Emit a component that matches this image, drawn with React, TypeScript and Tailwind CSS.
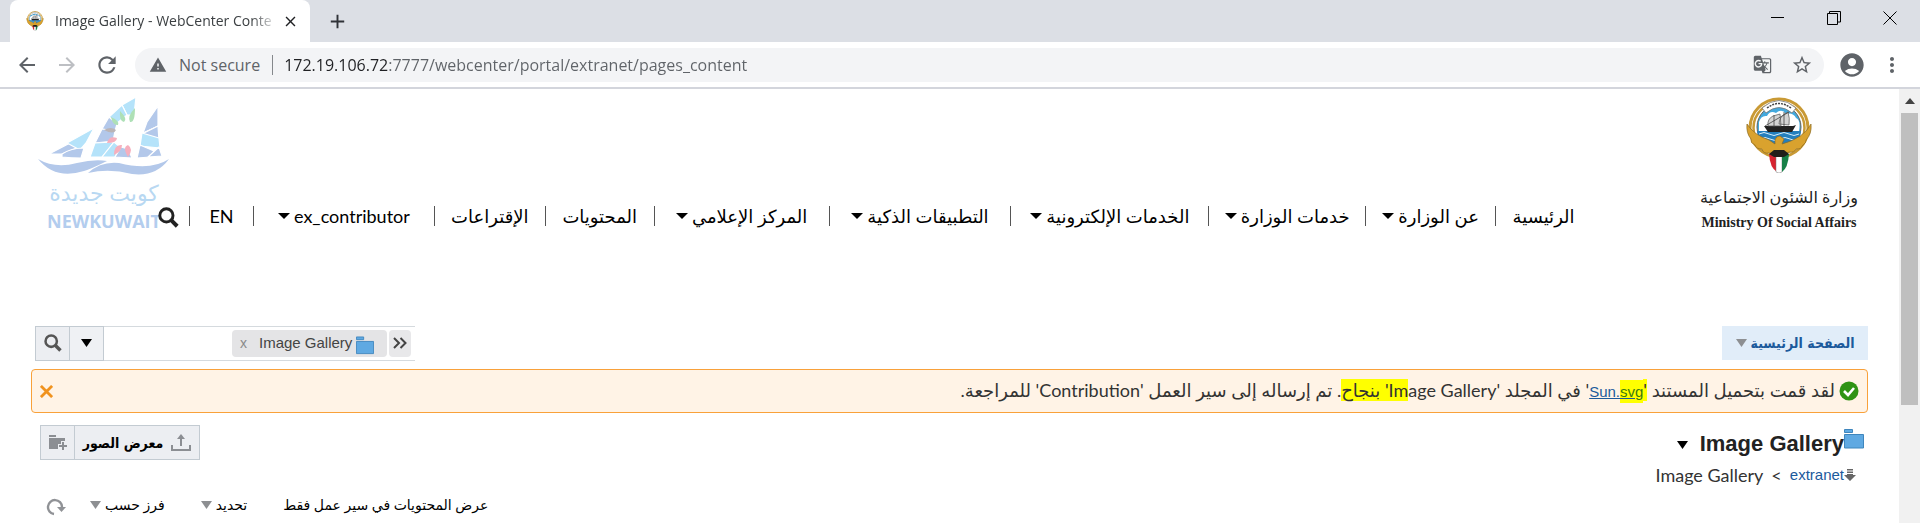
import type { ReactNode } from 'react'
import { MdArrowBack, MdArrowForward, MdRefresh, MdWarning, MdGTranslate, MdStarBorder, MdAccountCircle, MdMoreVert, MdClose, MdAdd } from 'react-icons/md'

interface NavEntry {
  label: string
  menu?: boolean
}

const NAV: NavEntry[] = [
  { label: 'الرئيسية' },
  { label: 'عن الوزارة', menu: true },
  { label: 'خدمات الوزارة', menu: true },
  { label: 'الخدمات الإلكترونية', menu: true },
  { label: 'التطبيقات الذكية', menu: true },
  { label: 'المركز الإعلامي', menu: true },
  { label: 'المحتويات' },
  { label: 'الإقتراعات' },
  { label: 'ex_contributor', menu: true },
  { label: 'EN' },
]

function Caret({ className }: { className: string }) {
  return (
    <svg viewBox="0 0 12 6" className={`h-[6px] w-3 shrink-0 ${className}`} aria-hidden="true">
      <path d="M0 0h12L6 6z" fill="currentColor" />
    </svg>
  )
}

function SortCaret({ className }: { className: string }) {
  return (
    <svg viewBox="0 0 11 8" className={`h-2 w-[11px] shrink-0 ${className}`} aria-hidden="true">
      <path d="M0 0h11L5.500 8z" fill="currentColor" />
    </svg>
  )
}

function Folder({ className }: { className: string }) {
  return (
    <svg viewBox="0 0 20 20" className={`shrink-0 ${className}`} aria-hidden="true">
      <path d="M.5.5h8v3h-8zM.5 5.500h19v13.500H.5z" fill="#5fa9e2" stroke="#3f86bd" />
    </svg>
  )
}

function Magnifier({ className }: { className: string }) {
  return (
    <svg viewBox="0 0 20 20" className={`shrink-0 ${className}`} fill="none" stroke="currentColor" aria-hidden="true">
      <circle cx="8" cy="8" r="6.300" strokeWidth="2.800" />
      <path d="M12.500 12.500l5.800 5.800" strokeWidth="3.800" />
    </svg>
  )
}

function Emblem({ className }: { className: string }) {
  return (
    <svg viewBox="0 0 66 76" className={`shrink-0 ${className}`} aria-hidden="true">
      <circle cx="33" cy="31" r="29" fill="#fff" stroke="#c99a35" strokeWidth="3" />
      <circle cx="33" cy="31" r="25.500" fill="#fff" stroke="#c99a35" strokeWidth="2.500" />
      <circle cx="33" cy="30" r="22" fill="#43a9de" stroke="#6b6152" />
      <path d="M13 25Q15 18 21 19Q24 13 30 16Q36 11 40 17Q47 15 50 21Q55 23 53 34H13z" fill="#fff" />
      <path d="M16 11Q33-4 50 11L46 16Q33 5 20 16z" fill="#fff" stroke="#777" strokeWidth=".8" />
      <path d="M21 11Q33 2 45 11" fill="none" stroke="#444" strokeWidth="1.500" strokeDasharray="2 1" />
      <path d="M11 34h44Q54 50 33 53Q13 50 11 34z" fill="#247fbd" />
      <path d="M13 37q5-3 10 0t10 0 10 0 10 0M14 42q5-3 10 0t10 0 10 0 8 0" fill="none" stroke="#d7eefb" />
      <path d="M18 29h29l3-1-4 7H22z" fill="#222" />
      <path d="M22 29Q21 22 27 19l7-2 1 12zM33 27q0-8 9-12 2 6 1 13z" fill="#d4d4d4" stroke="#555" strokeWidth=".7" />
      <path d="M19 29L43 15M28 18v12M38 15v14" stroke="#444" strokeWidth=".8" />
      <path d="M1 27Q8 38 23 43L29 47V43Q30 39 34 39L38 42 36 47Q58 41 65 27Q66 37 60 43Q61 45 56 49Q56 52 50 52Q48 56 43 55L33 59 23 56Q17 57 16 52Q10 52 9 48Q4 46 5 42Q0 36 1 27z" fill="#d9a22e" stroke="#8c6b22" strokeWidth=".7" />
      <path d="M23 57h8v18Q24 71 23 57z" fill="#d7232f" />
      <path d="M30 58h6v17q-3 2-6 0z" fill="#fff" stroke="#777" strokeWidth=".5" />
      <path d="M36 57h7q-1 14-7 18z" fill="#178047" />
      <path d="M23 57l5-4h10l5 4-5 3H28z" fill="#221e1a" />
    </svg>
  )
}

function NewKuwaitBoat() {
  return (
    <svg viewBox="0 0 132 78" className="h-[78px] w-[132px]" aria-hidden="true">
      <g stroke="#fff" strokeWidth="1.200" strokeLinejoin="round">
        {/* front sail */}
        <path d="M11 57L34 45 41 50 24 57z" fill="#b3c8ea" />
        <path d="M29 46L56 31 48 46 42 53z" fill="#b5e3fa" />
        <path d="M24 57Q33 51 46 51L43 61Q33 61 24 60z" fill="#b3c8ea" />
        {/* main sail around the sun */}
        <path d="M98 0L84 8 89 18 96 18z" fill="#b5e3fa" />
        <path d="M84 8L71 20 78 27 89 18z" fill="#b5e3fa" />
        <path d="M71 20L64 32 77 34 79 27z" fill="#b3c8ea" />
        <path d="M64 32L57 46 75 44 77 34z" fill="#b3c8ea" />
        <path d="M57 46L52 60 64 60 76 45z" fill="#b5e3fa" />
        <path d="M64 60L76 45 82 50 77 60z" fill="#b5e3fa" />
        <path d="M77 60L83 50 90 52 94 61z" fill="#b3c8ea" />
        <circle cx="91" cy="35" r="12" fill="#fff" stroke="none" />
        {/* mizzen sail */}
        <path d="M120 9L109 25 105 36 120 29z" fill="#b3c8ea" />
        <path d="M104 37L120 29 121 44z" fill="#b3c8ea" />
        <path d="M104 36L121 41 122 51 102 49z" fill="#b5e3fa" />
        <path d="M102 48L116 54 112 60 99 61z" fill="#b3c8ea" />
        <path d="M121 50L124 59 110 60z" fill="#b3c8ea" />
      </g>
      <path d="M97 11Q89 19 92 25Q97 26 97 11zM82 14Q81 24 86 25Q90 22 82 14zM73 20Q75 29 80 28Q82 24 73 20z" fill="#aee0b6" />
      <path d="M66 33Q73 29 78 33Q76 38 66 33z" fill="#bab4b6" />
      <path d="M69 46Q71 38 79 41Q79 46 69 46zM76 58Q76 47 84 48Q84 54 76 58zM90 60Q84 50 90 48Q96 52 90 60z" fill="#f6afbd" />
      <path d="M0 62Q17 72 39 66Q56 62 69 64Q53 72 46 74Q17 83 0 62z" fill="#b3c8ea" />
      <path d="M50 76Q63 64 81 66Q113 74 131 62Q118 80 94 77Q71 71 50 76z" fill="#b3c8ea" />
    </svg>
  )
}

function IconButton({ label, children }: { label: string; children: ReactNode }) {
  return (
    <button aria-label={label} className="flex h-8 w-8 shrink-0 items-center justify-center">
      {children}
    </button>
  )
}

function BrowserChrome() {
  return (
    <div className="font-['Open_Sans',sans-serif]">
      <div className="flex h-[42px] items-stretch bg-[#dcdfe5] pl-[10px]">
        <div className="flex w-[300px] items-center rounded-t-lg bg-white pl-4 pr-2">
          <Emblem className="h-5 w-[18px]" />
          <span className="ml-[11px] flex-1 whitespace-nowrap text-sm text-[#3c4043] [mask-image:linear-gradient(to_right,black_88%,transparent)]">
            Image Gallery - WebCenter Conte
          </span>
          <button aria-label="Close tab" className="flex w-6 justify-center text-[#202124]">
            <MdClose size={17} />
          </button>
        </div>
        <button aria-label="New tab" className="ml-4 text-[#303338]">
          <MdAdd size={23} />
        </button>
        <div className="ml-auto flex items-start pr-[2px] pt-1 text-black">
          <button aria-label="Minimize" className="flex h-7 w-14 items-center justify-center">
            <svg viewBox="0 0 14 14" className="h-[14px] w-[14px]"><path d="M0 6.500h13" stroke="currentColor" /></svg>
          </button>
          <button aria-label="Restore" className="flex h-7 w-14 items-center justify-center">
            <svg viewBox="0 0 14 14" className="h-[14px] w-[14px]" fill="none" stroke="currentColor">
              <path d="M.5 2.500h10v11H.5zM2.500 2.500V.5h11V11H11" />
            </svg>
          </button>
          <button aria-label="Close" className="flex h-7 w-14 items-center justify-center">
            <svg viewBox="0 0 14 14" className="h-[14px] w-[14px]"><path d="M.5.5l13 13M13.500.5l-13 13" stroke="currentColor" /></svg>
          </button>
        </div>
      </div>
      <div className="flex h-[47px] items-center border-b-2 border-[#d3d5dc] bg-white pl-[11px] pr-3 text-[#5f6368]">
        <div className="flex gap-2">
          <IconButton label="Back"><MdArrowBack size={24} /></IconButton>
          <IconButton label="Forward"><MdArrowForward size={24} className="text-[#bdbfc3]" /></IconButton>
          <IconButton label="Reload"><MdRefresh size={26} /></IconButton>
        </div>
        <div className="ml-3 flex h-[34px] flex-1 items-center rounded-full bg-[#f3f4f6] pl-[14px] pr-[6px]">
          <MdWarning size={18} />
          <label htmlFor="address" className="ml-3 text-base">Not secure</label>
          <span className="ml-3 h-5 w-px bg-[#85888c]" />
          {/* host part is darker than the path */}
          <input
            id="address"
            className="ml-[11px] flex-1 bg-[linear-gradient(to_right,#202124_104px,#5f6368_104px)] bg-clip-text text-base text-transparent caret-black outline-none"
            defaultValue="172.19.106.72:7777/webcenter/portal/extranet/pages_content"
          />
          <div className="flex gap-2">
            <IconButton label="Translate"><MdGTranslate size={19} /></IconButton>
            <IconButton label="Bookmark"><MdStarBorder size={22} /></IconButton>
          </div>
        </div>
        <div className="ml-3 flex gap-2">
          <IconButton label="Profile"><MdAccountCircle size={28} /></IconButton>
          <IconButton label="Menu"><MdMoreVert size={24} /></IconButton>
        </div>
      </div>
    </div>
  )
}

function SiteHeader() {
  return (
    <header dir="rtl" className="flex items-start pl-[38px] pr-10">
      <a href="#" className="mt-2 flex w-40 flex-col items-center text-[#222]">
        <Emblem className="h-[76px] w-[66px]" />
        <span className="mt-2 whitespace-nowrap text-base leading-8">وزارة الشئون الاجتماعية</span>
        <span dir="ltr" className="whitespace-nowrap font-['Liberation_Serif',serif] text-sm font-bold leading-5">Ministry Of Social Affairs</span>
      </a>
      <nav className="mr-[108px] mt-[117px] grid flex-1 grid-cols-[96fr_130fr_157fr_198fr_182fr_175fr_109fr_111fr_181fr_63fr] divide-x divide-[#555] border-l border-[#555] text-lg leading-5 text-black">
        {NAV.map(item => (
          <a key={item.label} href="#" className="flex h-5 items-center justify-center gap-1 whitespace-nowrap">
            <span>{item.label}</span>
            {item.menu && <Caret className="text-black" />}
          </a>
        ))}
      </nav>
      <div className="mt-2 flex w-[151px] items-end justify-end">
        <button aria-label="بحث" className="z-10 pb-[3px] text-[#222]"><Magnifier className="h-[21px] w-[21px]" /></button>
        <a href="#" dir="ltr" className="-mr-3 flex w-[132px] flex-col items-center text-[#b3cdee]">
          <NewKuwaitBoat />
          <span className="text-[22px] leading-9 text-[#b8d8f2]">كويت جديدة</span>
          <span className="font-['Open_Sans',sans-serif] text-lg font-bold leading-5">NEWKUWAIT</span>
        </a>
      </div>
    </header>
  )
}

function SearchRow() {
  return (
    <div className="flex h-9 items-center justify-between pl-1">
      <div dir="ltr" className="flex h-[35px] w-[380px] items-center border-y border-[#d5dade]">
        <button aria-label="بحث" className="flex h-[35px] w-[35px] items-center justify-center border border-[#c3cbd2] bg-[#eceef2] text-[#555]">
          <Magnifier className="h-[18px] w-[18px]" />
        </button>
        <button aria-label="خيارات البحث" className="flex h-[35px] w-[34px] items-center justify-center border border-l-0 border-[#c3cbd2] bg-[#eff1f4]">
          <SortCaret className="text-black" />
        </button>
        <input aria-label="نص البحث" className="w-0 flex-1 outline-none" />
        <span className="flex h-[27px] w-[155px] items-center rounded-sm bg-[#e4e4e6] pl-2 font-['Liberation_Sans',sans-serif] text-[15px] text-[#444]">
          <button aria-label="إزالة" className="text-sm text-[#8a8a8a]">x</button>
          <span className="ml-3 whitespace-nowrap">Image Gallery</span>
          <Folder className="ml-1 mt-1 h-[19px] w-[18px]" />
        </span>
        <button aria-label="المزيد" className="ml-[2px] mr-1 flex h-[27px] w-[22px] items-center justify-center rounded-sm bg-[#e8e8ea] text-[#444]">
          <svg viewBox="0 0 14 12" className="h-3 w-[14px]" fill="none" stroke="currentColor" strokeWidth="2">
            <path d="M1 1l5 5-5 5M7.500 1l5 5-5 5" />
          </svg>
        </button>
      </div>
      <button className="flex h-[34px] w-[146px] items-center justify-center gap-1 bg-[#e1edf9] font-['DejaVu_Sans_Condensed',sans-serif] text-sm font-bold text-[#1c5a9c]">
        <SortCaret className="text-[#8d8f92]" />
        <span>الصفحة الرئيسية</span>
      </button>
    </div>
  )
}

function Banner() {
  return (
    <div role="status" dir="rtl" className="mt-2 flex h-11 items-center rounded border border-[#f9a13a] bg-[#fff3e6] px-2 text-lg leading-6 text-[#333]">
      <svg viewBox="0 0 20 20" className="h-5 w-5 shrink-0" aria-hidden="true">
        <circle cx="10" cy="10" r="9.500" fill="#2f9314" />
        <path d="M5 10l4 4 6-7" fill="none" stroke="#fff" strokeWidth="2.600" />
      </svg>
      <p className="mr-1 flex-1 whitespace-nowrap">
        لقد قمت بتحميل المستند <mark className="bg-[#ff0] text-inherit">'</mark>
        <a href="#" dir="ltr" className="font-['Liberation_Sans',sans-serif] text-[15px] text-[#1c5a9c] underline">Sun.<mark className="bg-[#ff0] py-[3px] text-[#3a7a10]">svg</mark></a>
        ' في المجلد '<bdi><mark className="bg-[#ff0] text-inherit">Im</mark>age Gallery</bdi>
        <mark className="bg-[#ff0] text-inherit">' بنجاح</mark>. تم إرساله إلى سير العمل 'Contribution' للمراجعة.
      </p>
      <button aria-label="إغلاق" className="text-[#f0921e]">
        <svg viewBox="0 0 14 14" className="h-[13px] w-[13px]"><path d="M1 1l12 12M13 1L1 13" stroke="currentColor" strokeWidth="3" /></svg>
      </button>
    </div>
  )
}

function GalleryHead() {
  return (
    <div dir="rtl" className="mt-3 flex items-start justify-between pl-[9px]">
      <div className="pr-1">
        <div className="flex h-9 items-center">
          <Folder className="mb-2 h-5 w-5" />
          <h1 className="font-['Liberation_Sans',sans-serif] text-[22px] font-bold text-[#222]">Image Gallery</h1>
          <SortCaret className="mr-3 mt-1 text-black" />
        </div>
        <div className="flex h-7 items-center pr-2 text-lg text-[#333]">
          <svg viewBox="0 0 12 12" className="h-3 w-3" fill="#666" aria-hidden="true">
            <path d="M3 0h6v1.500H3zM3 2.500h6V4H3zM3 5h6v1h3l-6 6-6-6h3z" />
          </svg>
          <a href="#" className="font-['Liberation_Sans',sans-serif] text-[15px] text-[#1c5a9c]">extranet</a>
          <span className="mx-2">&gt;</span>
          <span>Image Gallery</span>
        </div>
      </div>
      <div dir="ltr" className="flex font-['DejaVu_Sans_Condensed',sans-serif] text-sm font-bold text-black">
        <button aria-label="مجلد جديد" className="flex h-[35px] w-[35px] items-center justify-center border border-[#c3cbd2] bg-[#eceef2]">
          <svg viewBox="0 0 18 16" className="h-4 w-[18px]" fill="#8b8e93" aria-hidden="true">
            <path d="M0 0h7v2H0zM0 3h16v3h-4v3H9v5H0z" />
            <path d="M13 7h2v3h3v2h-3v3h-2v-3h-3v-2h3z" />
          </svg>
        </button>
        <button className="flex h-[35px] w-[125px] items-center justify-center gap-2 border border-l-0 border-[#c3cbd2] bg-[#eceef2]">
          <span>معرض الصور</span>
          <svg viewBox="0 0 20 17" className="h-[17px] w-5" fill="none" stroke="#8b8e93" strokeWidth="2" aria-hidden="true">
            <path d="M1 11v5h18v-5M10 12V2" />
            <path d="M6 5l4-5 4 5z" fill="#8b8e93" stroke="none" />
          </svg>
        </button>
      </div>
    </div>
  )
}

function FilterRow() {
  return (
    <div className="flex h-8 items-center pl-[15px] text-sm text-black">
      <button aria-label="تحديث" className="mt-1 text-[#909296]">
        <svg viewBox="0 0 20 18" className="h-[18px] w-5" fill="none" stroke="currentColor" strokeWidth="2.400">
          <path d="M8 16A7 7 0 1 1 16 9" />
          <path d="M11 9h9l-4.500 5z" fill="currentColor" stroke="none" />
        </svg>
      </button>
      <button className="ml-6 flex items-center gap-1">
        <SortCaret className="text-[#8d8f92]" />فرز حسب
      </button>
      <button className="ml-9 flex items-center gap-1">
        <SortCaret className="text-[#8d8f92]" />تحديد
      </button>
      <button className="ml-9">عرض المحتويات في سير عمل فقط</button>
    </div>
  )
}

export default function App() {
  return (
    <div className="flex min-h-screen flex-col bg-white">
      <BrowserChrome />
      <div className="flex flex-1 items-stretch">
        <main className="min-w-0 flex-1 font-[Lato,'DejaVu_Sans',sans-serif]">
          <SiteHeader />
          <div className="mt-[92px] pl-[31px] pr-[31px]">
            <SearchRow />
            <Banner />
            <GalleryHead />
            <FilterRow />
          </div>
        </main>
        <div aria-hidden="true" className="flex w-[21px] flex-col items-center bg-[#f1f1f1]">
          <div className="flex h-6 items-center">
            <svg viewBox="0 0 10 6" className="h-[6px] w-[10px]"><path d="M0 6h10L5 0z" fill="#444" /></svg>
          </div>
          <div className="h-[292px] w-[17px] bg-[#bfbfbf]" />
        </div>
      </div>
    </div>
  )
}
